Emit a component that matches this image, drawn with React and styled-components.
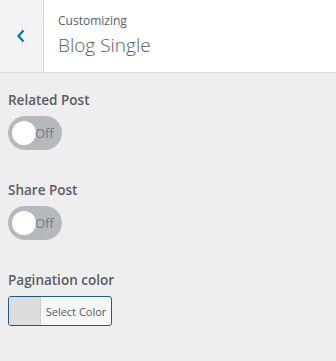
import React, { useState } from "react";
import styled, { createGlobalStyle } from "styled-components";

const GlobalStyle = createGlobalStyle`
  html, body {
    margin: 0;
    padding: 0;
    background: #eeeeee;
  }
  body {
    font-family: "Open Sans", "Noto Sans", sans-serif;
    color: #555d66;
  }
`;

const Panel = styled.div`
  width: 336px;
  min-height: 361px;
  background: #eeeeee;
`;

const Header = styled.div`
  display: flex;
  height: 72px;
  background: #ffffff;
  border-bottom: 1px solid #dddddd;
`;

const BackButton = styled.button`
  width: 44px;
  border: none;
  border-right: 1px solid #dddddd;
  background: #f3f3f5;
  color: #0073aa;
  display: flex;
  align-items: center;
  justify-content: center;
  padding: 0 2px 0 0;
  cursor: pointer;
`;

const Titles = styled.div`
  display: flex;
  flex-direction: column;
  padding: 11px 0 0 14px;
`;

const Crumb = styled.span`
  font-size: 12px;
  line-height: 20px;
  color: #555d66;
`;

const Title = styled.span`
  font-size: 19px;
  font-weight: 300;
  line-height: 28px;
  color: #555d66;
`;

const Body = styled.div`
  display: flex;
  flex-direction: column;
  gap: 30px;
  padding: 17px 8px 0;
`;

const Control = styled.div`
  display: flex;
  flex-direction: column;
  align-items: flex-start;
  gap: 6px;
`;

const Label = styled.span`
  font-size: 13.5px;
  font-weight: 600;
  line-height: 20px;
  color: #555d66;
`;

const Toggle = styled.button`
  position: relative;
  width: 54px;
  height: 34px;
  border: none;
  border-radius: 17px;
  background: ${(p) => (p.$on ? "#0085ba" : "#b4b9be")};
  padding: 0;
  cursor: pointer;
  font-family: inherit;
`;

const Knob = styled.span`
  position: absolute;
  top: 5px;
  left: ${(p) => (p.$on ? "26px" : "4px")};
  width: 24px;
  height: 24px;
  border-radius: 50%;
  background: #ffffff;
`;

const ToggleText = styled.span`
  position: absolute;
  top: 7px;
  left: ${(p) => (p.$on ? "8px" : "27px")};
  font-size: 13px;
  line-height: 20px;
  color: #72777c;
`;

const ColorButton = styled.button`
  display: flex;
  align-items: stretch;
  height: 30px;
  width: 104px;
  padding: 0;
  border: 1px solid #1e5d80;
  border-radius: 3px;
  background: #f7f7f7;
  overflow: hidden;
  cursor: pointer;
  font-family: inherit;
`;

const Swatch = styled.span`
  width: 31px;
  background: #dddddd;
  border-right: 1px solid #cccccc;
`;

const ColorText = styled.span`
  flex: 1;
  display: flex;
  align-items: center;
  justify-content: center;
  font-size: 11px;
  color: #555d66;
`;

function Switch() {
  const [on, setOn] = useState(false);
  return (
    <Toggle $on={on} onClick={() => setOn(!on)}>
      <Knob $on={on} />
      <ToggleText $on={on}>{on ? "On" : "Off"}</ToggleText>
    </Toggle>
  );
}

export default function App() {
  return (
    <Panel>
      <GlobalStyle />
      <Header>
        <BackButton aria-label="Back">
          <svg width="10" height="14" viewBox="0 0 10 14">
            <path d="M7.5 1.5 L2.5 7 L7.5 12.5" fill="none" stroke="currentColor" strokeWidth="2.2" />
          </svg>
        </BackButton>
        <Titles>
          <Crumb>Customizing</Crumb>
          <Title>Blog Single</Title>
        </Titles>
      </Header>
      <Body>
        <Control>
          <Label>Related Post</Label>
          <Switch />
        </Control>
        <Control>
          <Label>Share Post</Label>
          <Switch />
        </Control>
        <Control>
          <Label>Pagination color</Label>
          <ColorButton>
            <Swatch />
            <ColorText>Select Color</ColorText>
          </ColorButton>
        </Control>
      </Body>
    </Panel>
  );
}
